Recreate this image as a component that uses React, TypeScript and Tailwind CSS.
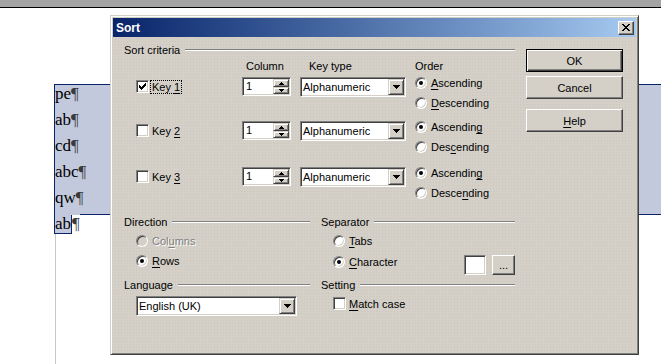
import React from "react";

const sunken =
  "border border-t-[#808080] border-l-[#808080] border-r-white border-b-white shadow-[inset_1px_1px_0_#404040,inset_-1px_-1px_0_#d4d0c8]";
const raised =
  "bg-[#d4d0c8] border border-t-[#d4d0c8] border-l-[#d4d0c8] border-r-[#404040] border-b-[#404040] shadow-[inset_1px_1px_0_#fff,inset_-1px_-1px_0_#808080]";
const btn =
  "bg-[#d4d0c8] border border-t-white border-l-white border-r-[#404040] border-b-[#404040] shadow-[inset_-1px_-1px_0_#808080]";

function U({ children }: { children: React.ReactNode }) {
  return <span className="underline decoration-1 underline-offset-[2px]">{children}</span>;
}

function M({ text, i }: { text: string; i: number }) {
  if (i < 0) return <>{text}</>;
  return (
    <>
      {text.slice(0, i)}
      <U>{text[i]}</U>
      {text.slice(i + 1)}
    </>
  );
}

function Radio({ checked, disabled }: { checked?: boolean; disabled?: boolean }) {
  return (
    <span
      className={`inline-flex h-[12px] w-[12px] shrink-0 items-center justify-center rounded-full border border-t-[#808080] border-l-[#808080] border-r-white border-b-white shadow-[inset_1px_1px_0_#404040,inset_-1px_-1px_0_#d4d0c8] ${
        disabled ? "bg-[#d4d0c8]" : "bg-white"
      }`}
    >
      {checked && <span className="h-[4px] w-[4px] rounded-full bg-black" />}
    </span>
  );
}

function Check({ checked }: { checked?: boolean }) {
  const tops = [2, 3, 4, 3, 2, 1, 0];
  return (
    <span className={`inline-flex h-[13px] w-[13px] shrink-0 items-center justify-center bg-white ${sunken}`}>
      {checked && (
        <svg width="7" height="7" viewBox="0 0 7 7" shapeRendering="crispEdges">
          {tops.map((t, x) => (
            <rect key={x} x={x} y={t} width="1" height="3" fill="#000" />
          ))}
        </svg>
      )}
    </span>
  );
}

function DownArrow() {
  return (
    <svg width="7" height="4" viewBox="0 0 7 4" shapeRendering="crispEdges">
      <path d="M0 0H7V1H6V2H5V3H4V4H3V3H2V2H1V1H0Z" fill="#000" />
    </svg>
  );
}

function Combo({ className, text }: { className: string; text: string }) {
  return (
    <div className={`flex h-[20px] bg-white p-[1px] ${sunken} ${className}`}>
      <div className="flex-1 pl-[1px] leading-[16px]">{text}</div>
      <div className={`flex h-[16px] w-[16px] items-center justify-center ${raised}`}>
        <DownArrow />
      </div>
    </div>
  );
}

function Spin() {
  return (
    <div className={`flex h-[19px] w-[49px] bg-white p-[1px] ${sunken}`}>
      <div className="flex-1 pl-[2px] leading-[15px]">1</div>
      <div className="flex w-[16px] flex-col">
        <div className={`flex h-[8px] items-center justify-center ${raised}`}>
          <svg width="5" height="3" viewBox="0 0 5 3" shapeRendering="crispEdges">
            <path d="M2 0H3V1H4V2H5V3H0V2H1V1H2Z" fill="#000" />
          </svg>
        </div>
        <div className={`flex h-[7px] items-center justify-center ${raised}`}>
          <svg width="5" height="3" viewBox="0 0 5 3" shapeRendering="crispEdges">
            <path d="M0 0H5V1H4V2H3V3H2V2H1V1H0Z" fill="#000" />
          </svg>
        </div>
      </div>
    </div>
  );
}

function GroupHeader({ children }: { children: React.ReactNode }) {
  return (
    <div className="flex h-[14px] items-center">
      <span className="whitespace-nowrap">{children}</span>
      <div className="ml-[5px] h-[2px] flex-1 border-t border-b border-t-[#808080] border-b-white" />
    </div>
  );
}

function RadioRow({
  label,
  checked,
  disabled,
}: {
  label: React.ReactNode;
  checked?: boolean;
  disabled?: boolean;
}) {
  return (
    <div className="flex h-[20px] items-center">
      <Radio checked={checked} disabled={disabled} />
      <span
        className={`ml-[3px] border border-transparent whitespace-nowrap ${
          disabled ? "text-[#808080] [text-shadow:1px_1px_0_#fff]" : ""
        }`}
      >
        {label}
      </span>
    </div>
  );
}

type KeyRowProps = {
  n: number;
  checked?: boolean;
  focus?: boolean;
  h: string;
  asc: number;
  desc: number;
};

function KeyRow({ n, checked, focus, h, asc, desc }: KeyRowProps) {
  return (
    <div className={`flex pl-[12px] ${h}`}>
      <div className="flex w-[106px] items-start pt-[7px]">
        <Check checked={checked} />
        <span
          className={`ml-[1px] px-[1px] leading-[12px] border ${
            focus ? "border-dotted border-black" : "border-transparent"
          }`}
        >
          Key <U>{n}</U>
        </span>
      </div>
      <div className="pt-[4px]">
        <Spin />
      </div>
      <div className="ml-[9px] pt-[4px]">
        <Combo className="w-[106px]" text="Alphanumeric" />
      </div>
      <div className="ml-[9px] flex flex-col">
        <RadioRow label={<M text="Ascending" i={asc} />} checked />
        <RadioRow label={<M text="Descending" i={desc} />} />
      </div>
    </div>
  );
}

function Dialog() {
  return (
    <div
      className={`absolute left-[110px] top-[15px] h-[340px] w-[529px] border border-t-[#d4d0c8] border-l-[#d4d0c8] border-r-[#404040] border-b-[#404040] bg-[#d4d0c8] bg-[radial-gradient(#cac6be_0.7px,transparent_0.8px)] bg-[length:3px_3px] p-[2px] text-[11px] leading-[14px] text-black shadow-[inset_1px_1px_0_#fff,inset_-1px_-1px_0_#808080] font-['Liberation_Sans',Arial,sans-serif]`}
    >
      {/* title bar */}
      <div className="flex h-[19px] items-center bg-linear-to-r from-[#0a246a] to-[#a6caf0] pl-[3px] pr-[2px]">
        <span className="flex-1 text-[12px] font-bold text-white">Sort</span>
        <div className={`flex h-[14px] w-[16px] items-center justify-center ${btn}`}>
          <svg width="8" height="7" viewBox="0 0 8 7" shapeRendering="crispEdges">
            <path
              d="M0 0H2V1H3V2H5V1H6V0H8V1H7V2H6V3H5V4H6V5H7V6H8V7H6V6H5V5H3V6H2V7H0V6H1V5H2V4H3V3H2V2H1V1H0Z"
              fill="#000"
            />
          </svg>
        </div>
      </div>

      {/* body */}
      <div className="flex pl-[11px]">
        <div className="w-[391px]">
          <div className="mt-[6px]">
            <GroupHeader>Sort criteria</GroupHeader>
          </div>
          <div className="mt-[2px] flex h-[14px] items-center pl-[122px]">
            <span className="w-[63px]">Column</span>
            <span className="w-[106px]">Key type</span>
            <span>Order</span>
          </div>
          <KeyRow n={1} checked focus h="h-[44px]" asc={0} desc={0} />
          <KeyRow n={2} h="h-[46px]" asc={8} desc={3} />
          <KeyRow n={3} h="h-[40px]" asc={8} desc={5} />

          <div className="mt-[12px] flex">
            <div className="w-[186px]">
              <GroupHeader>Direction</GroupHeader>
              <div className="pl-[12px] pt-[2px]">
                <RadioRow label={<M text="Columns" i={3} />} disabled />
                <RadioRow label={<M text="Rows" i={0} />} checked />
              </div>
            </div>
            <div className="ml-[11px] w-[194px]">
              <GroupHeader>Separator</GroupHeader>
              <div className="pl-[12px] pt-[2px]">
                <RadioRow label={<M text="Tabs" i={0} />} />
                <div className="flex h-[24px] items-start">
                  <div className="flex h-[22px] items-center">
                    <Radio checked />
                    <span className="ml-[3px] border border-transparent">
                      <M text="Character" i={0} />
                    </span>
                  </div>
                  <div className="ml-auto mt-[4px] flex">
                    <div className={`h-[20px] w-[22px] bg-white ${sunken}`} />
                    <div className={`ml-[6px] flex h-[20px] w-[23px] items-center justify-center leading-[12px] ${btn}`}>
                      ...
                    </div>
                  </div>
                </div>
              </div>
            </div>
          </div>

          <div className="mt-[3px] flex">
            <div className="w-[186px]">
              <GroupHeader>Language</GroupHeader>
              <div className="mt-[4px] pl-[12px]">
                <Combo className="w-[161px]" text="English (UK)" />
              </div>
            </div>
            <div className="ml-[11px] w-[194px]">
              <GroupHeader>Setting</GroupHeader>
              <div className="mt-[3px] flex h-[17px] items-center pl-[12px]">
                <Check />
                <span className="ml-[2px] border border-transparent">
                  <M text="Match case" i={0} />
                </span>
              </div>
            </div>
          </div>
        </div>

        <div className="ml-[11px] flex w-[97px] flex-col pt-[12px]">
          <div className="flex h-[23px] items-center justify-center border border-black bg-[#d4d0c8] shadow-[inset_1px_1px_0_#fff,inset_-1px_-1px_0_#404040,inset_-2px_-2px_0_#808080]">
            OK
          </div>
          <div className={`mt-[4px] flex h-[23px] items-center justify-center ${btn}`}>Cancel</div>
          <div className={`mt-[10px] flex h-[23px] items-center justify-center ${btn}`}>
            <M text="Help" i={0} />
          </div>
        </div>
      </div>
    </div>
  );
}

function Line({ text }: { text: string }) {
  return (
    <div className="h-[26px] leading-[18px] whitespace-nowrap">
      {text}
      <span className="text-[#3a3a3a]">¶</span>
    </div>
  );
}

export default function App() {
  return (
    <div className="relative h-[364px] w-[661px] overflow-hidden bg-white">
      <div className="h-[8px] border-b border-black bg-[#a3a3a3]" />
      <div className="mt-[76px] text-[17px] text-black font-['Liberation_Serif','Times_New_Roman',serif]">
        <div className="ml-[54px] border-t border-l border-[#0a246a] bg-[#c3c9dc]">
          <Line text="pe" />
          <Line text="ab" />
          <Line text="cd" />
          <Line text="abc" />
          <Line text="qw" />
        </div>
        <div className="ml-[54px] flex h-[19px] leading-[18px]">
          <span className="border-r border-b border-l border-[#0a246a] bg-[#c3c9dc]">ab</span>
          <span className="text-[#3a3a3a]">¶</span>
          <div className="-mt-px flex-1 border-t border-[#0a246a]" />
        </div>
        <div className="ml-[55px] h-[140px] border-l border-[#c8c8c8]" />
      </div>
      <Dialog />
    </div>
  );
}
